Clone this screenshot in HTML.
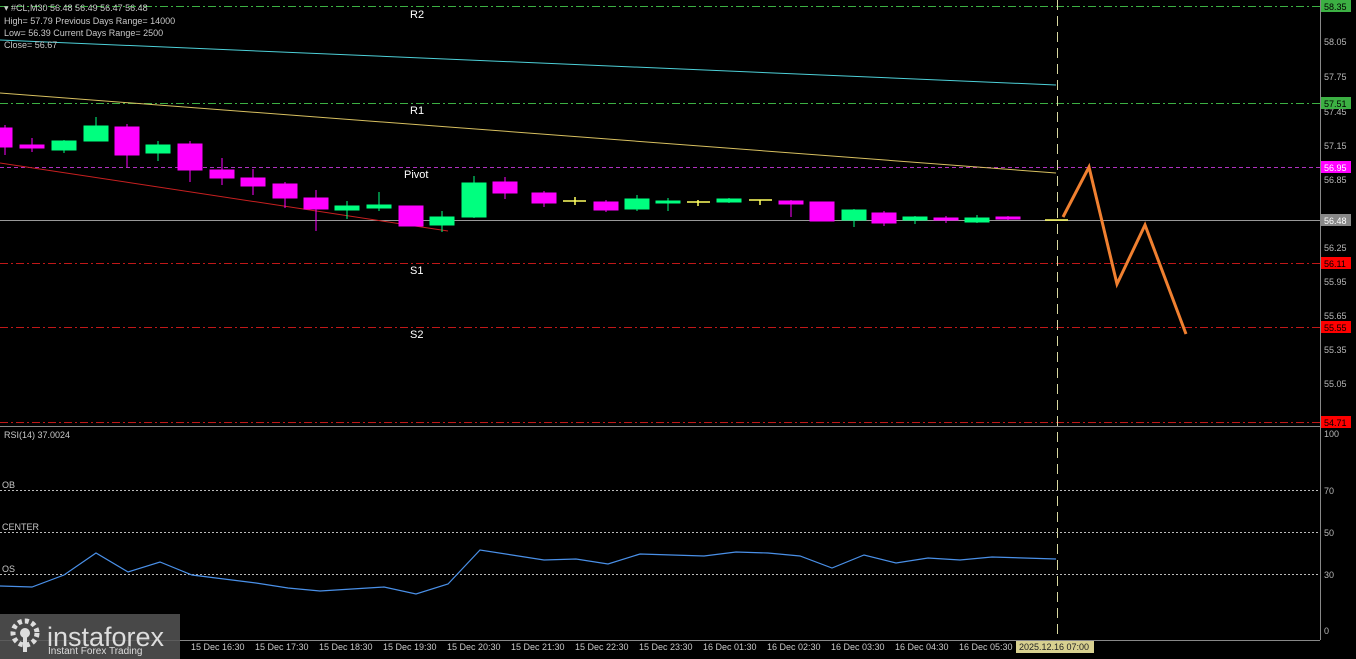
<!DOCTYPE html>
<html><head><meta charset="utf-8"><style>
html,body{margin:0;padding:0;background:#000;width:1356px;height:659px;overflow:hidden}
svg{display:block}
text{font-family:"Liberation Sans",sans-serif}
</style></head><body>
<svg width="1356" height="659" viewBox="0 0 1356 659" xmlns="http://www.w3.org/2000/svg">
<rect width="1356" height="659" fill="#000"/>
<!-- horizontal levels -->
<g stroke-width="1" fill="none">
<line x1="0" y1="6.5" x2="1320" y2="6.5" stroke="#3cb043" stroke-dasharray="8,3,2,3"/>
<line x1="0" y1="103.5" x2="1320" y2="103.5" stroke="#3cb043" stroke-dasharray="8,3,2,3"/>
<line x1="0" y1="167.5" x2="1320" y2="167.5" stroke="#b030c0" stroke-dasharray="4,3"/>
<line x1="0" y1="220.5" x2="1320" y2="220.5" stroke="#999"/>
<line x1="0" y1="263.5" x2="1320" y2="263.5" stroke="#c01818" stroke-dasharray="8,3,2,3"/>
<line x1="0" y1="327.5" x2="1320" y2="327.5" stroke="#c01818" stroke-dasharray="8,3,2,3"/>
<line x1="0" y1="422.5" x2="1320" y2="422.5" stroke="#c01818" stroke-dasharray="8,3,2,3"/>
<line x1="0" y1="426.5" x2="1320" y2="426.5" stroke="#888"/>
<line x1="1320.5" y1="0" x2="1320.5" y2="640" stroke="#888"/>
<line x1="0" y1="640.5" x2="1320" y2="640.5" stroke="#888"/>
<line x1="1057.5" y1="0" x2="1057.5" y2="640" stroke="#d8d8a0" stroke-dasharray="10,6"/>
<!-- MA lines -->
<line x1="0" y1="40" x2="1056" y2="85" stroke="#4dd0d8"/>
<line x1="0" y1="93" x2="1056" y2="173" stroke="#d8c060"/>
<line x1="0" y1="163" x2="448" y2="231" stroke="#c82020"/>
</g>
<!-- candles -->
<g>
<g stroke="#ff00ff" fill="#ff00ff">
<line x1="5" y1="125" x2="5" y2="155"/><rect x="0" y="128" width="12" height="19"/>
<line x1="32" y1="138" x2="32" y2="152"/><rect x="20" y="145" width="24" height="3"/>
<line x1="127" y1="124" x2="127" y2="167"/><rect x="115" y="127" width="24" height="28"/>
<line x1="190" y1="141" x2="190" y2="182"/><rect x="178" y="144" width="24" height="26"/>
<line x1="222" y1="158" x2="222" y2="185"/><rect x="210" y="170" width="24" height="8"/>
<line x1="253" y1="169" x2="253" y2="195"/><rect x="241" y="178" width="24" height="8"/>
<line x1="285" y1="182" x2="285" y2="208"/><rect x="273" y="184" width="24" height="14"/>
<line x1="316" y1="190" x2="316" y2="231"/><rect x="304" y="198" width="24" height="11"/>
<rect x="399" y="206" width="24" height="20"/>
<line x1="505" y1="177" x2="505" y2="199"/><rect x="493" y="182" width="24" height="11"/>
<line x1="544" y1="191" x2="544" y2="207"/><rect x="532" y="193" width="24" height="10"/>
<line x1="606" y1="200" x2="606" y2="212"/><rect x="594" y="202" width="24" height="8"/>
<line x1="791" y1="200" x2="791" y2="217"/><rect x="779" y="201" width="24" height="3"/>
<rect x="810" y="202" width="24" height="19"/>
<line x1="884" y1="211" x2="884" y2="226"/><rect x="872" y="213" width="24" height="10"/>
<line x1="946" y1="216" x2="946" y2="223"/><rect x="934" y="218" width="24" height="2"/>
<line x1="1008" y1="216" x2="1008" y2="220"/><rect x="996" y="217" width="24" height="2"/>
</g>
<g stroke="#00ff7f" fill="#00ff7f">
<line x1="64" y1="140" x2="64" y2="153"/><rect x="52" y="141" width="24" height="9"/>
<line x1="96" y1="117" x2="96" y2="141"/><rect x="84" y="126" width="24" height="15"/>
<line x1="158" y1="141" x2="158" y2="161"/><rect x="146" y="145" width="24" height="8"/>
<line x1="347" y1="201" x2="347" y2="219"/><rect x="335" y="206" width="24" height="4"/>
<line x1="379" y1="192" x2="379" y2="211"/><rect x="367" y="205" width="24" height="3"/>
<line x1="442" y1="211" x2="442" y2="232"/><rect x="430" y="217" width="24" height="8"/>
<line x1="474" y1="176" x2="474" y2="218"/><rect x="462" y="183" width="24" height="34"/>
<line x1="637" y1="195" x2="637" y2="211"/><rect x="625" y="199" width="24" height="10"/>
<line x1="668" y1="198" x2="668" y2="211"/><rect x="656" y="201" width="24" height="2"/>
<line x1="729" y1="198" x2="729" y2="203"/><rect x="717" y="199" width="24" height="3"/>
<line x1="854" y1="209" x2="854" y2="227"/><rect x="842" y="210" width="24" height="10"/>
<line x1="915" y1="216" x2="915" y2="224"/><rect x="903" y="217" width="24" height="3"/>
<line x1="977" y1="215" x2="977" y2="223"/><rect x="965" y="218" width="24" height="4"/>
</g>
<g stroke="#ffff60" stroke-width="1.5">
<line x1="563" y1="201" x2="586" y2="201"/><line x1="575" y1="197" x2="575" y2="205"/>
<line x1="687" y1="202" x2="710" y2="202"/><line x1="698" y1="200" x2="698" y2="206"/>
<line x1="749" y1="200" x2="772" y2="200"/><line x1="760" y1="200" x2="760" y2="205"/>
<line x1="1045" y1="220" x2="1068" y2="220"/>
</g>
</g>
<!-- zigzag -->
<polyline points="1063,217 1089,167 1117,284 1145,225 1186,334" fill="none" stroke="#f08030" stroke-width="3"/>
<!-- labels -->
<g fill="#fff" font-size="11">
<text x="410" y="18">R2</text><text x="410" y="114">R1</text>
<text x="404" y="178">Pivot</text><text x="410" y="274">S1</text><text x="410" y="338">S2</text>
</g>
<g fill="#c8c8c8" font-size="9">
<text x="4" y="11">▾ #CL,M30  56.48 56.49 56.47 56.48</text>
<text x="4" y="24">High= 57.79    Previous Days Range= 14000</text>
<text x="4" y="36">Low= 56.39    Current Days Range= 2500</text>
<text x="4" y="48">Close= 56.67</text>
<text x="4" y="438">RSI(14) 37.0024</text>
<text x="2" y="488">OB</text><text x="2" y="530">CENTER</text><text x="2" y="572">OS</text>
</g>
<!-- right axis -->
<g fill="#b8b8b8" font-size="9">
<text x="1324" y="45">58.05</text><text x="1324" y="80">57.75</text><text x="1324" y="115">57.45</text>
<text x="1324" y="149">57.15</text><text x="1324" y="183">56.85</text><text x="1324" y="251">56.25</text>
<text x="1324" y="285">55.95</text><text x="1324" y="319">55.65</text><text x="1324" y="353">55.35</text>
<text x="1324" y="387">55.05</text>
<text x="1324" y="437">100</text><text x="1324" y="494">70</text><text x="1324" y="536">50</text>
<text x="1324" y="578">30</text><text x="1324" y="634">0</text>
</g>
<g font-size="9">
<rect x="1321" y="0" width="30" height="12" fill="#3cb043"/><text x="1324" y="10" fill="#000">58.35</text>
<rect x="1321" y="97" width="30" height="12" fill="#3cb043"/><text x="1324" y="107" fill="#000">57.51</text>
<rect x="1321" y="161" width="30" height="12" fill="#ff00ff"/><text x="1324" y="171" fill="#fff">56.95</text>
<rect x="1321" y="214" width="30" height="12" fill="#888"/><text x="1324" y="224" fill="#fff">56.48</text>
<rect x="1321" y="257" width="30" height="12" fill="#ff0000"/><text x="1324" y="267" fill="#000">56.11</text>
<rect x="1321" y="321" width="30" height="12" fill="#ff0000"/><text x="1324" y="331" fill="#000">55.55</text>
<rect x="1321" y="416" width="30" height="12" fill="#ff0000"/><text x="1324" y="426" fill="#000">54.71</text>
</g>
<!-- RSI -->
<g stroke="#bbb" stroke-dasharray="2,2">
<line x1="0" y1="490.5" x2="1320" y2="490.5"/><line x1="0" y1="532.5" x2="1320" y2="532.5"/><line x1="0" y1="574.5" x2="1320" y2="574.5"/>
</g>
<polyline fill="none" stroke="#4a90e8" stroke-width="1.2" points="0,586 32,587 64,575 96,553 128,572 160,562 192,575 224,579 256,583 288,588 320,591 352,589 384,587 416,594 448,584 480,550 512,555 544,560 576,559 608,564 640,554 672,555 704,556 736,552 768,553 800,556 832,568 864,555 896,563 928,558 960,560 992,557 1024,558 1056,559"/>
<!-- time axis -->
<g fill="#c8c8c8" font-size="9">
<text x="191" y="650">15 Dec 16:30</text><text x="255" y="650">15 Dec 17:30</text><text x="319" y="650">15 Dec 18:30</text>
<text x="383" y="650">15 Dec 19:30</text><text x="447" y="650">15 Dec 20:30</text><text x="511" y="650">15 Dec 21:30</text>
<text x="575" y="650">15 Dec 22:30</text><text x="639" y="650">15 Dec 23:30</text><text x="703" y="650">16 Dec 01:30</text>
<text x="767" y="650">16 Dec 02:30</text><text x="831" y="650">16 Dec 03:30</text><text x="895" y="650">16 Dec 04:30</text>
<text x="959" y="650">16 Dec 05:30</text>
</g>
<rect x="1016" y="641" width="78" height="12" fill="#d8d090"/>
<text x="1019" y="650" font-size="9" fill="#222">2025.12.16 07:00</text>
<!-- logo -->
<rect x="0" y="614" width="180" height="45" fill="#555" opacity="0.85"/>
<g fill="#ddd">
<circle cx="25" cy="633" r="12" fill="none" stroke="#ddd" stroke-width="5" stroke-dasharray="4,3"/>
<circle cx="25" cy="633" r="5"/>
<rect x="23" y="636" width="4" height="16"/>
</g>
<text x="47" y="646" font-size="27" fill="#ddd">instaforex</text>
<text x="48" y="654" font-size="10" fill="#ddd">Instant Forex Trading</text>
</svg>
</body></html>
